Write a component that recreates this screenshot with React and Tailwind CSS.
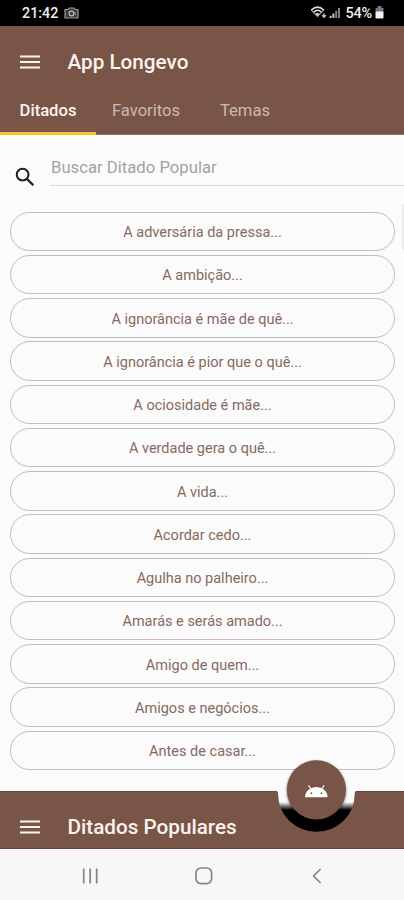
const ditados = [
  'A adversária da pressa...',
  'A ambição...',
  'A ignorância é mãe de quê...',
  'A ignorância é pior que o quê...',
  'A ociosidade é mãe...',
  'A verdade gera o quê...',
  'A vida...',
  'Acordar cedo...',
  'Agulha no palheiro...',
  'Amarás e serás amado...',
  'Amigo de quem...',
  'Amigos e negócios...',
  'Antes de casar...',
]

function MenuIcon() {
  return (
    <svg width="20" height="14" viewBox="0 0 20 14" className="shrink-0">
      <path d="M0 1.5h20M0 7h20M0 12.5h20" stroke="#fbf3ee" strokeWidth="2" />
    </svg>
  )
}

function StatusBar() {
  return (
    <div className="h-[25.5px] shrink-0 bg-black flex items-center pl-[22px] pr-[20px] text-[#eeeeee]">
      <span className="text-[14.3px] font-medium leading-none w-[37px] whitespace-nowrap">21:42</span>
      <svg width="15" height="12" viewBox="0 0 15 12" className="ml-[5px]">
        <path d="M1 2.5h3L5.2 1h4.6L11 2.5h3v8.5H1z" fill="#3c3c3c" stroke="#999" strokeWidth="1.2" />
        <circle cx="7.5" cy="6.5" r="2.4" fill="none" stroke="#bbb" strokeWidth="1.2" />
        <path d="M11 5v3" stroke="#aaa" />
      </svg>
      <div className="ml-auto flex items-center">
        {/* wifi + signal */}
        <svg width="30" height="13" viewBox="0 0 30 13">
          <path d="M0 4.2Q6.5 -2 13 4.2M2.6 6.2Q6.5 2.4 10.4 6.2" fill="none" stroke="#ddd" strokeWidth="1.5" />
          <path d="M0.5 4.2L6.5 10.5L12.5 4.2" fill="none" stroke="#aaa" strokeWidth="1.1" />
          <path d="M4.5 7.8Q6.5 6.2 8.5 7.8L6.5 10z" fill="#ddd" />
          <path d="M13 7.5v4.5M10.8 9.8h4.5" stroke="#ddd" strokeWidth="1.3" />
          <path d="M19.6 12V9.8M22.4 12V7.4" stroke="#ccc" strokeWidth="1.9" />
          <path d="M25.2 12V4.8M28 12V2" stroke="#888" strokeWidth="1.9" />
        </svg>
        <span className="ml-[4.5px] w-[28.5px] pt-[2px] text-[14.5px] font-medium leading-none tracking-[-0.3px] whitespace-nowrap">54%</span>
        <svg width="9" height="13" viewBox="0 0 9 13" className="ml-[1px]">
          <path d="M2.5 0h4v2h2v4h-8V2h2z" fill="#777" />
          <rect x="0.5" y="5.5" width="8" height="7" rx="1" fill="#f2f2f2" />
        </svg>
      </div>
    </div>
  )
}

function Header() {
  return (
    <div className="h-[109.5px] shrink-0 bg-[#795548] flex flex-col">
      <div className="h-[73px] flex items-center pl-5 gap-[27.5px]">
        <MenuIcon />
        <h1 className="pt-[2px] text-[20.7px] font-medium text-[#fbf3ee] whitespace-nowrap">App Longevo</h1>
      </div>
      <div className="flex flex-1 text-[16.6px] leading-[23px] border-b border-[#8d6e63]">
        <div className="w-[96px] text-center text-[#fbf3ee] font-medium border-b-[3px] border-[#fbc02d] -mb-px">
          Ditados
        </div>
        <div className="w-[100px] text-center text-[#cdb9b1]">Favoritos</div>
        <div className="w-[98px] text-center text-[#cdb9b1]">Temas</div>
      </div>
    </div>
  )
}

function SearchField() {
  return (
    <div className="h-[51px] flex shrink-0">
      <svg width="20" height="20" viewBox="0 0 20 20" className="ml-[15px] mt-[32px] shrink-0">
        <circle cx="7.6" cy="7.6" r="5.9" fill="none" stroke="#1c1c1c" strokeWidth="2" />
        <path d="M12 12l6.3 6.3" stroke="#1c1c1c" strokeWidth="2.3" />
      </svg>
      <div className="ml-[15px] flex-1 border-b border-[#dcdcdc] pt-[20px] pl-px text-[16.7px] text-[#a3a3a3]">
        Buscar Ditado Popular
      </div>
    </div>
  )
}

function FloatingButton() {
  return (
    <div className="absolute left-[274px] -top-[36px] w-[86px] h-[80px]">
      <svg width="86" height="80" viewBox="0 0 86 80">
        <defs>
          <linearGradient id="notchFill" gradientUnits="userSpaceOnUse" x1="0" y1="46" x2="0" y2="54">
            <stop offset="0" stopColor="#fbfbfb" />
            <stop offset="1" stopColor="#000" />
          </linearGradient>
          <filter id="shade" x="-20%" y="-20%" width="140%" height="140%">
            <feGaussianBlur stdDeviation="1.8" />
          </filter>
        </defs>
        <path d="M2 34.8Q4.2 35 4.2 39A38.2 36.8 0 0 0 80.6 39Q80.6 35 82.8 34.8z" fill="url(#notchFill)" />
        <circle cx="42.4" cy="34.8" r="29.5" fill="#000" opacity="0.5" filter="url(#shade)" />
        <circle cx="42.4" cy="33.8" r="29.6" fill="#795548" />
        <path d="M31 41.3A11.3 10.3 0 0 1 53.6 41.3z" fill="#fff" />
        <path d="M36.8 33l-2.3-3.6M47.8 33l2.3-3.6" stroke="#fff" strokeWidth="1.1" />
        <circle cx="37.4" cy="37.2" r="0.9" fill="#795548" />
        <circle cx="47.4" cy="37.2" r="0.9" fill="#795548" />
      </svg>
    </div>
  )
}

function BottomBar() {
  return (
    <div className="relative h-[58px] shrink-0 bg-[#795548] border-y border-[#6b4336] flex items-center pl-5 gap-[27.5px] pt-[14px]">
      <MenuIcon />
      <h2 className="pt-[2px] text-[20.7px] font-medium text-[#fbf3ee] whitespace-nowrap">Ditados Populares</h2>
      <FloatingButton />
    </div>
  )
}

function NavBar() {
  return (
    <div className="h-[51px] shrink-0 bg-[#f7f7f7] flex items-center pt-[3px]">
      <svg width="16" height="16" viewBox="0 0 16 16" className="ml-[82px]">
        <path d="M1.7 0.5v15M8.2 0.5v15M14.7 0.5v15" stroke="#858585" strokeWidth="1.7" />
      </svg>
      <svg width="18" height="18" viewBox="0 0 18 18" className="ml-[96.5px]">
        <rect x="1" y="1" width="15.6" height="15.6" rx="5" fill="none" stroke="#858585" strokeWidth="1.7" />
      </svg>
      <svg width="10" height="16" viewBox="0 0 10 16" className="ml-[99.5px]">
        <path d="M8.6 1L1.6 8l7 7" fill="none" stroke="#808080" strokeWidth="1.6" />
      </svg>
    </div>
  )
}

export default function App() {
  return (
    <div className="w-[404px] h-[900px] overflow-hidden flex flex-col bg-[#fbfbfb] font-[Roboto,sans-serif]">
      <StatusBar />
      <Header />
      <SearchField />
      <div className="flex-1 flex">
        <div className="flex-1 flex flex-col gap-[3.75px] pt-[25.5px] pl-[10px]">
          {ditados.map((d) => (
            <button
              key={d}
              className="h-[39.5px] pt-[3.5px] shrink-0 rounded-full border border-[#c9bab5] text-[14.5px] text-[#856a60]"
            >
              {d}
            </button>
          ))}
        </div>
        <div className="w-[9px] flex justify-end pt-[18px]">
          <div className="w-[2px] h-[46px] bg-[#ececec]" />
        </div>
      </div>
      <BottomBar />
      <NavBar />
    </div>
  )
}
